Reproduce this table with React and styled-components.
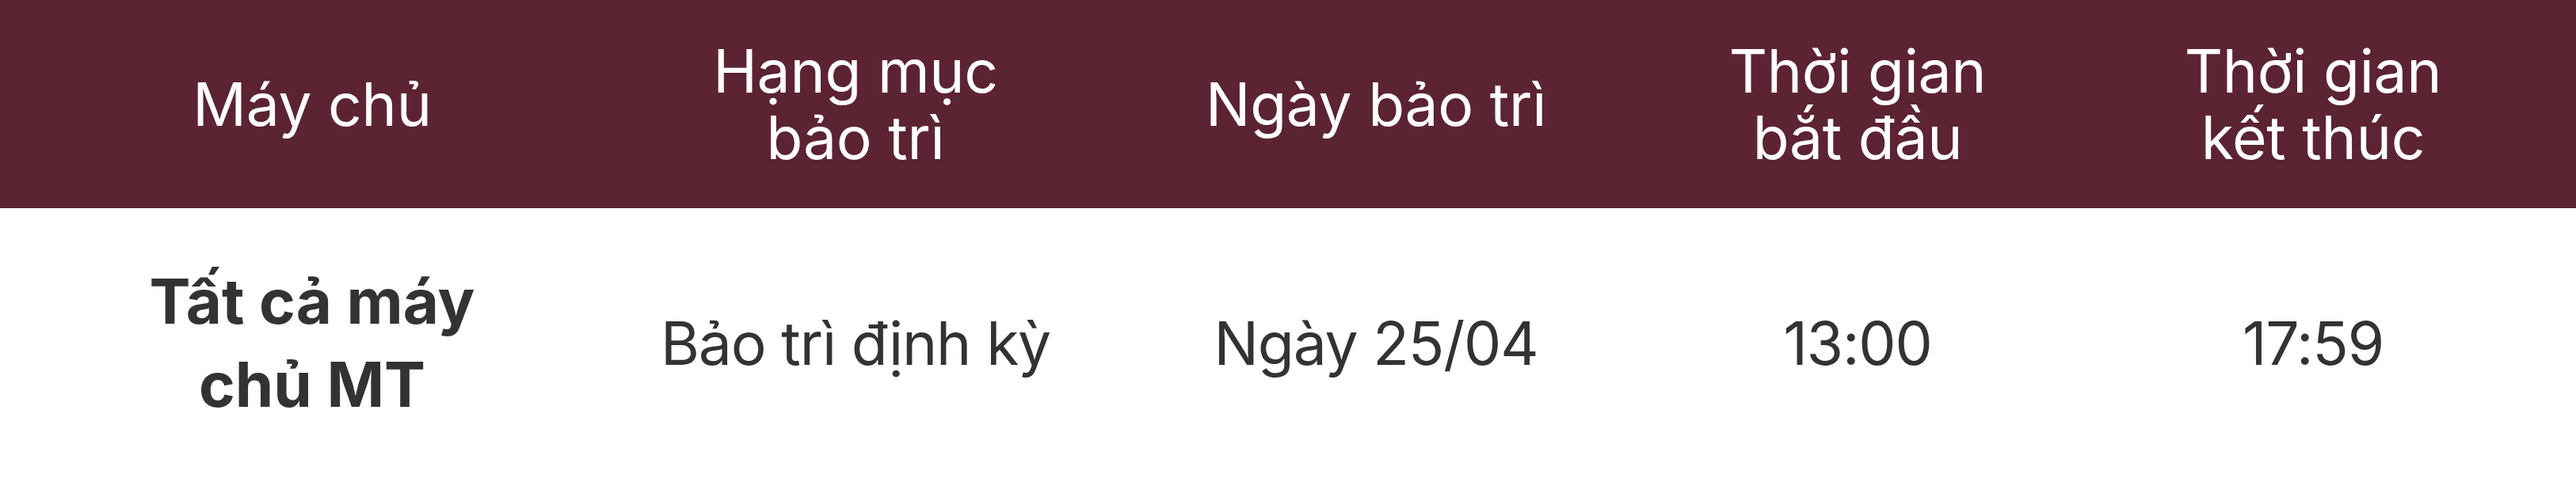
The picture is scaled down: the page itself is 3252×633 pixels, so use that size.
import React from "react";
import styled, { createGlobalStyle } from "styled-components";

const GlobalStyle = createGlobalStyle`
  html, body {
    margin: 0;
    padding: 0;
    background: #ffffff;
  }
  body {
    font-family: Inter, "Noto Sans", sans-serif;
  }
`;

const Table = styled.div`
  display: grid;
  grid-template-columns: 788px 584px 730px 486px 664px;
  width: 3252px;
`;

const HeadCell = styled.div`
  height: 263px;
  background: #5c2333;
  color: #ffffff;
  display: flex;
  align-items: center;
  justify-content: center;
  text-align: center;
  font-size: 75px;
  font-weight: 400;
  letter-spacing: -0.3px;
  line-height: 84px;
`;

const BodyCell = styled.div`
  height: 370px;
  box-sizing: border-box;
  padding-bottom: 30px;
  background: #ffffff;
  color: #333333;
  display: flex;
  align-items: center;
  justify-content: center;
  text-align: center;
  font-size: ${(p) => (p.$bold ? "78px" : "75px")};
  font-weight: ${(p) => (p.$bold ? 700 : 400)};
  letter-spacing: ${(p) => (p.$bold ? "0" : "-1.2px")};
  line-height: 105px;
`;

const columns = [
  { head: ["Máy chủ"], body: ["Tất cả máy", "chủ MT"], bold: true },
  { head: ["Hạng mục", "bảo trì"], body: ["Bảo trì định kỳ"] },
  { head: ["Ngày bảo trì"], body: ["Ngày 25/04"] },
  { head: ["Thời gian", "bắt đầu"], body: ["13:00"] },
  { head: ["Thời gian", "kết thúc"], body: ["17:59"] },
];

const Lines = ({ items }) =>
  items.map((t, i) => (
    <React.Fragment key={i}>
      {i > 0 && <br />}
      {t}
    </React.Fragment>
  ));

export default function App() {
  return (
    <>
      <GlobalStyle />
      <Table>
        {columns.map((c, i) => (
          <HeadCell key={"h" + i}>
            <div>
              <Lines items={c.head} />
            </div>
          </HeadCell>
        ))}
        {columns.map((c, i) => (
          <BodyCell key={"b" + i} $bold={c.bold}>
            <div>
              <Lines items={c.body} />
            </div>
          </BodyCell>
        ))}
      </Table>
    </>
  );
}
